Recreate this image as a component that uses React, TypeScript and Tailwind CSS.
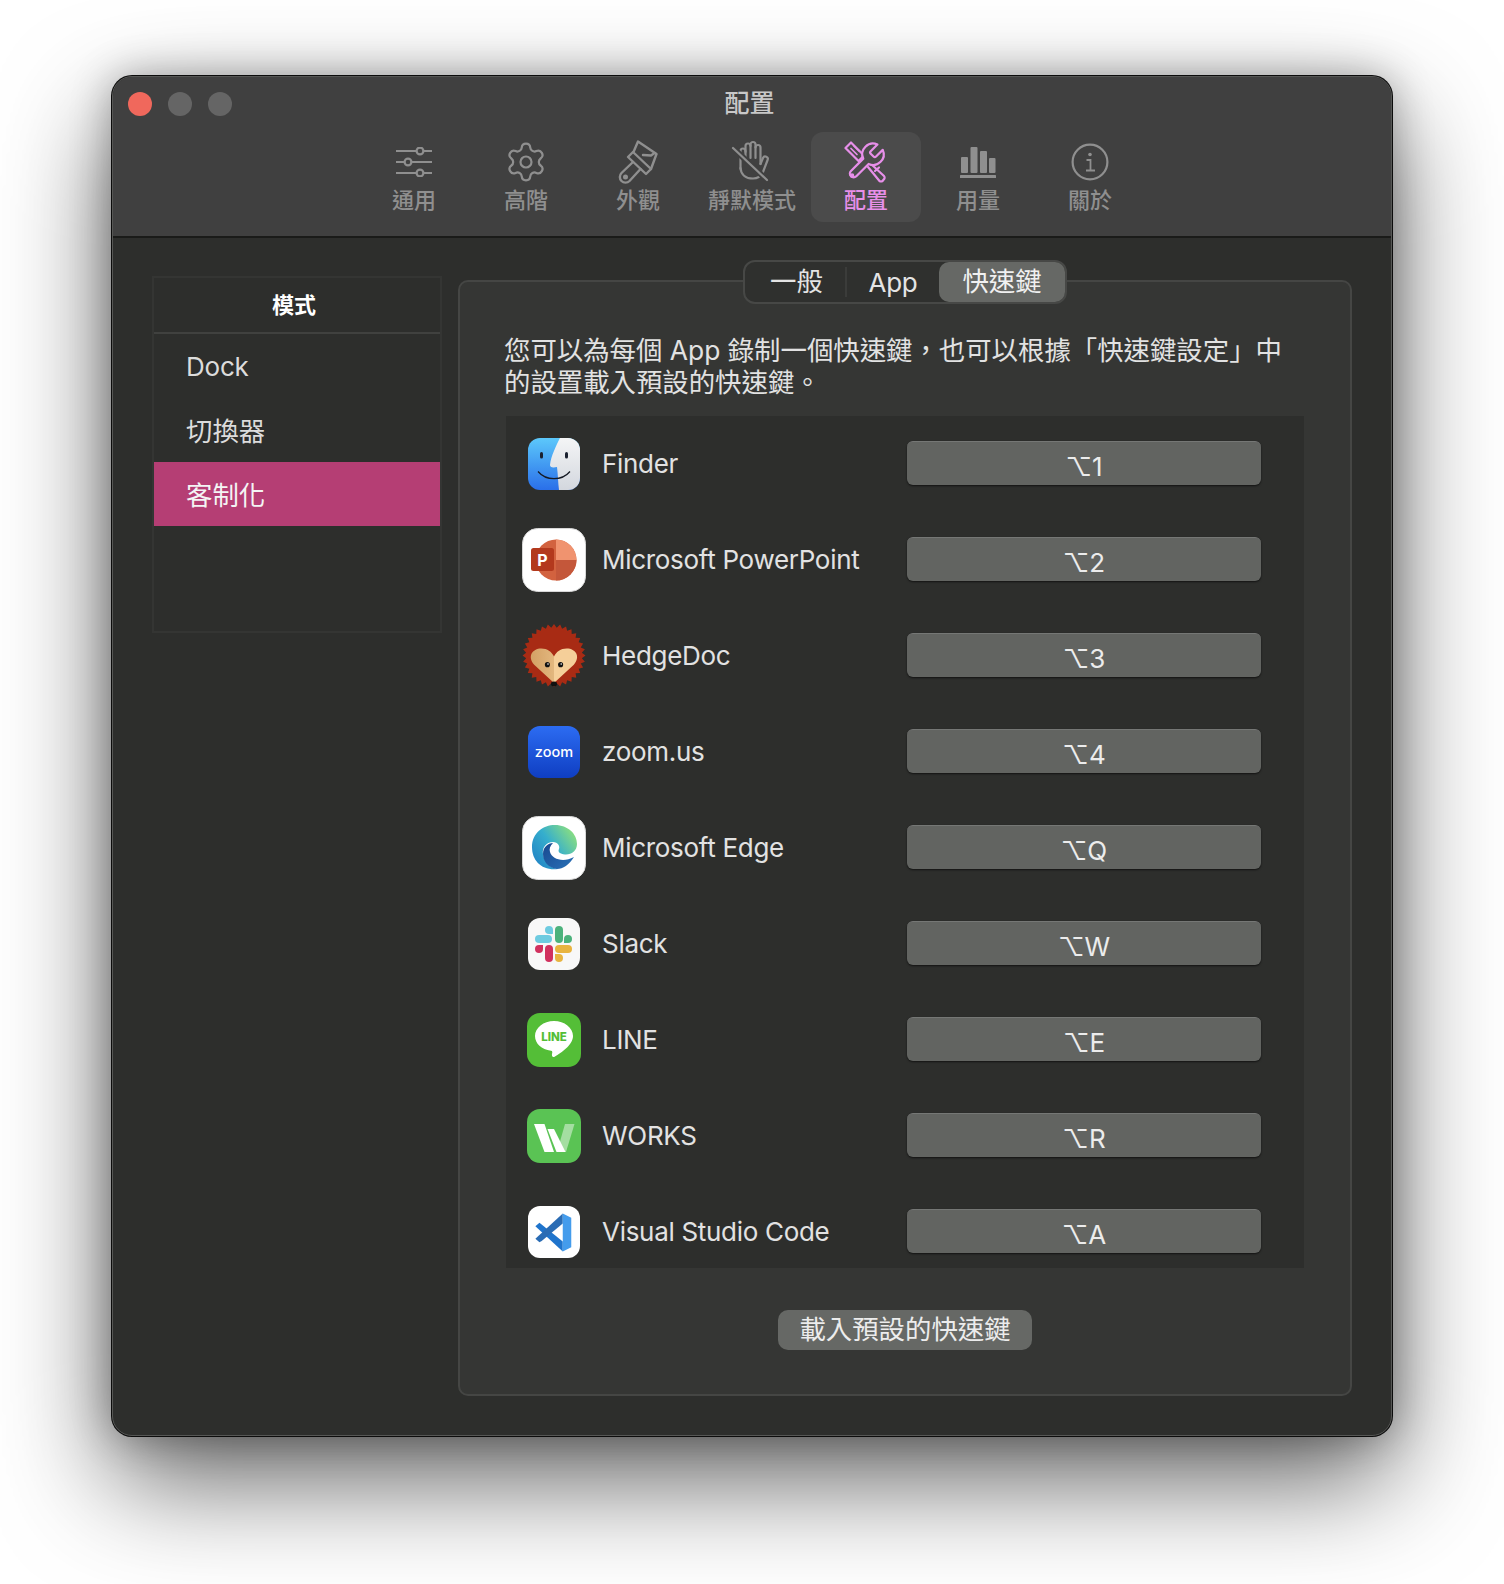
import React from "react";
import { Settings } from "lucide-react";

const G = "#8f8f8f";

function Sliders() {
  return (
    <svg width="36" height="30" viewBox="0 0 36 30" fill="none" stroke={G} strokeWidth="2.2">
      <path d="M0 4H20M28 4H36M0 15H8M16 15H36M0 26H20M28 26H36" />
      <circle cx="24" cy="4" r="3.4" />
      <circle cx="12" cy="15" r="3.4" />
      <circle cx="24" cy="26" r="3.4" />
    </svg>
  );
}

function Brush() {
  return (
    <svg width="40" height="44" viewBox="0 0 40 44" fill="none" stroke={G} strokeWidth="2.4" strokeLinejoin="round" strokeLinecap="round">
      <path d="M15.5 12 L20 1.5 L38.5 14 L33 29" />
      <path d="M25 15 L33 15.5 L36.5 13" />
      <path d="M10 17 L15 12 L33 29 L28 34 Z" />
      <path d="M15 22 L3.5 33 A5.5 5.5 0 0 0 11.5 41 L22.5 29" />
      <circle cx="7.5" cy="37" r="1.3" />
    </svg>
  );
}

function HandOff() {
  return (
    <svg width="44" height="44" viewBox="0 0 44 44" fill="none" stroke={G} strokeWidth="2.2" strokeLinecap="round" strokeLinejoin="round">
      <path d="M10.5 29 V11 a2.5 2.5 0 0 1 5 0 V18" />
      <path d="M15.5 12 V6 a2.5 2.5 0 0 1 5 0 V18" />
      <path d="M20.5 6 V4.5 a2.5 2.5 0 0 1 5 0 V18" />
      <path d="M25.5 7.5 a2.5 2.5 0 0 1 5 0 V24" />
      <path d="M30.5 24 L33 18 a2.5 2.5 0 0 1 4.6 2 L33 32 C31 36 27 38.5 23 38.5 C16 38.5 11 35 10.5 28" />
      <path d="M3 8L37 40" stroke="#404040" strokeWidth="6" strokeLinecap="butt" />
      <path d="M3 8L37 40" />
    </svg>
  );
}

function Tools() {
  return (
    <svg width="44" height="44" viewBox="0 0 44 44" fill="none" stroke="#e78fe9" strokeWidth="2.2" strokeLinejoin="round" strokeLinecap="round">
      <path d="M1.5 8 L7 2.5 L20 15.5 L14.5 21 Z" />
      <path d="M7 8.5 L13 14.5 M10 6 L15 11" strokeWidth="1.7" />
      <path d="M24 27 L35.5 41 Q37 42 38.5 41 L40.5 38.5 Q41 37 40 36 L27 24" />
      <path d="M31 31 L35 27.5" />
      <g transform="scale(1.78) translate(0.3 0)" strokeWidth="1.25">
        <path d="M14.7 6.3a1 1 0 0 0 0 1.4l1.6 1.6a1 1 0 0 0 1.4 0l3.77-3.77a6 6 0 0 1-7.94 7.94l-6.91 6.91a2.12 2.12 0 0 1-3-3l6.91-6.91a6 6 0 0 1 7.94-7.94l-3.76 3.76z" fill="#4b4b4b" />
      </g>
      <circle cx="8" cy="35.5" r="1.2" />
    </svg>
  );
}

function Bars() {
  return (
    <svg width="36" height="32" viewBox="0 0 36 32" fill={G}>
      <rect x="1" y="11" width="7" height="16" rx="1" />
      <rect x="10.5" y="1" width="7" height="26" rx="1" />
      <rect x="20" y="5" width="7" height="22" rx="1" />
      <rect x="29" y="12" width="6.5" height="15" rx="1" />
      <rect x="0" y="29" width="36" height="3" rx="0.5" />
    </svg>
  );
}

function Info() {
  return (
    <svg width="38" height="38" viewBox="0 0 38 38" fill="none" stroke={G} strokeWidth="2.2">
      <circle cx="19" cy="19" r="17.4" />
      <circle cx="19" cy="11.5" r="1.8" fill={G} stroke="none" />
      <path d="M15.5 17H19.5V27M15 27.5H24" strokeWidth="1.8" />
    </svg>
  );
}

function Finder() {
  return (
    <svg width="52" height="52" viewBox="0 0 52 52">
      <defs>
        <linearGradient id="fb" x1="0" y1="0" x2="0" y2="1">
          <stop offset="0" stopColor="#5cc8fb" />
          <stop offset="1" stopColor="#2a6fe9" />
        </linearGradient>
        <linearGradient id="fw" x1="0" y1="0" x2="0" y2="1">
          <stop offset="0" stopColor="#f4f5f6" />
          <stop offset="1" stopColor="#d3d7de" />
        </linearGradient>
        <clipPath id="fc">
          <rect width="52" height="52" rx="12" />
        </clipPath>
      </defs>
      <g clipPath="url(#fc)">
        <rect width="52" height="52" fill="url(#fb)" />
        <path d="M32 0 C28 8 23 18 22 27 C22 29 24 30 29 29 C30 37 30 45 31 52 L52 52 L52 0 Z" fill="url(#fw)" />
      </g>
      <rect x="12" y="14" width="3" height="6.5" rx="1.5" fill="#1a2130" />
      <rect x="37" y="14" width="3" height="6.5" rx="1.5" fill="#1a2130" />
      <path d="M10 33.5 C18 43 34 43 42 33.5" fill="none" stroke="#151a24" strokeWidth="1.2" />
    </svg>
  );
}

function PowerPoint() {
  return (
    <svg width="64" height="64" viewBox="0 0 64 64">
      <rect x="0.5" y="0.5" width="63" height="63" rx="15" fill="#fff" stroke="#d8d8d8" />
      <circle cx="34" cy="32" r="20.5" fill="#d2623f" />
      <path d="M34 32 V11.5 A20.5 20.5 0 0 1 54.5 32 Z" fill="#f0936f" />
      <path d="M34 32 H54.5 A20.5 20.5 0 0 1 34 52.5 Z" fill="#c4573a" />
      <rect x="9" y="20" width="23" height="23" rx="2.5" fill="#b3391d" />
      <text x="20.5" y="37.5" textAnchor="middle" fontFamily="Inter, sans-serif" fontWeight="700" fontSize="16" fill="#fff">P</text>
    </svg>
  );
}

function Hedgehog() {
  const pts: string[] = [];
  const n = 32;
  for (let i = 0; i < n * 2; i++) {
    const r = i % 2 === 0 ? 31 : 27.5;
    const a = (Math.PI * i) / n;
    pts.push(`${31.5 + r * Math.cos(a)},${31 + r * Math.sin(a)}`);
  }
  return (
    <svg width="64" height="64" viewBox="0 0 63 63">
      <defs>
        <linearGradient id="hh" x1="0" y1="0" x2="1" y2="0">
          <stop offset="0" stopColor="#d4a165" />
          <stop offset="0.5" stopColor="#e2b77e" />
          <stop offset="0.5" stopColor="#f5cf99" />
          <stop offset="1" stopColor="#f5cf99" />
        </linearGradient>
      </defs>
      <polygon points={pts.join(" ")} fill="#a82b14" />
      <path d="M31.5 58 L12 40 C5 32 10 24 19 24 C25 24 29 27 31.5 32 C34 27 38 24 44 24 C53 24 58 32 51 40 Z" fill="url(#hh)" />
      <circle cx="25" cy="40" r="2.5" fill="#111" />
      <circle cx="38" cy="40" r="2.5" fill="#111" />
      <circle cx="25.6" cy="39.4" r="0.8" fill="#fff" />
      <circle cx="38.6" cy="39.4" r="0.8" fill="#fff" />
      <ellipse cx="31.5" cy="59" rx="3" ry="2.4" fill="#111" />
    </svg>
  );
}

function Zoom() {
  return (
    <svg width="52" height="52" viewBox="0 0 52 52">
      <defs>
        <linearGradient id="zb" x1="0" y1="0" x2="0" y2="1">
          <stop offset="0" stopColor="#2c6cf2" />
          <stop offset="1" stopColor="#0f3ec2" />
        </linearGradient>
      </defs>
      <rect width="52" height="52" rx="12" fill="url(#zb)" />
      <text x="26" y="30.5" textAnchor="middle" fontFamily="Inter, sans-serif" fontWeight="500" fontSize="14.5" fill="#fff">zoom</text>
    </svg>
  );
}

function Edge() {
  return (
    <svg width="64" height="64" viewBox="0 0 64 64">
      <defs>
        <linearGradient id="eg" x1="0" y1="1" x2="1" y2="0.3">
          <stop offset="0" stopColor="#1f7cc4" />
          <stop offset="0.55" stopColor="#35aecd" />
          <stop offset="1" stopColor="#86dc84" />
        </linearGradient>
        <linearGradient id="ed" x1="0" y1="0" x2="1" y2="1">
          <stop offset="0" stopColor="#18488f" />
          <stop offset="1" stopColor="#2a72b8" />
        </linearGradient>
      </defs>
      <rect x="0.5" y="0.5" width="63" height="63" rx="15" fill="#fff" stroke="#d8d8d8" />
      <path d="M10 31 C10 17 21 9 33 9 C46 9 55 18 55 28 C55 35 49 39 43 38.5 C38 38 35.5 36 37 33 C38 30 36 26 31 26 C24 26 20 32 21 38 C22 46 28 52 36 53 C20 55 10 45 10 31 Z" fill="url(#eg)" />
      <path d="M21 38 C21 31 26 27 31 27 C28 30 27 33 28 36 C30 43 41 47 52 41 C47 49 41 53 35 53 C27 52 21 46 21 38 Z" fill="url(#ed)" />
    </svg>
  );
}

function Slack() {
  return (
    <svg width="52" height="52" viewBox="0 0 52 52">
      <rect width="52" height="52" rx="12" fill="#f8f8f8" />
      <g fill="#6ecbe0">
        <rect x="7" y="17" width="17" height="8" rx="4" />
        <path d="M17 12a4 4 0 0 1 8 0v4h-4a4 4 0 0 1-4-4z" />
      </g>
      <g fill="#4cb27c">
        <rect x="27" y="8" width="8" height="17" rx="4" />
        <path d="M40 17a4 4 0 0 1 0 8h-4v-4a4 4 0 0 1 4-4z" />
      </g>
      <g fill="#e8b440">
        <rect x="27" y="27" width="17" height="8" rx="4" />
        <path d="M27 36h4a4 4 0 0 1 0 8 4 4 0 0 1-4-4z" />
      </g>
      <g fill="#d1315f">
        <rect x="17" y="27" width="8" height="17" rx="4" />
        <path d="M11 27a4 4 0 0 0 0 8 4 4 0 0 0 4-4v-4z" />
      </g>
    </svg>
  );
}

function Line() {
  return (
    <svg width="54" height="54" viewBox="0 0 54 54">
      <rect width="54" height="54" rx="13" fill="#54be37" />
      <path d="M27 8 C16.5 8 8 14.8 8 23 C8 30.5 14.5 36.5 24 37.8 C25.4 38 25.6 39 25 41 C24.6 43 25.5 45 28 43.5 C34 40 46 32 46 23 C46 14.8 37.5 8 27 8 Z" fill="#fff" />
      <text x="27" y="27.5" textAnchor="middle" fontFamily="Inter, sans-serif" fontWeight="800" fontSize="11.5" fill="#54be37">LINE</text>
    </svg>
  );
}

function Works() {
  return (
    <svg width="54" height="54" viewBox="0 0 54 54">
      <rect width="54" height="54" rx="13" fill="#5ac354" />
      <polygon points="38,15 47.5,15 39,43 30,43" fill="#fff" opacity="0.45" />
      <polygon points="7,15 17.5,15 27,43 17.5,43" fill="#fff" />
      <polygon points="20.5,20 27,20 38.5,43 29.5,43" fill="#fff" />
    </svg>
  );
}

function VSCode() {
  return (
    <svg width="52" height="52" viewBox="0 0 52 52">
      <rect width="52" height="52" rx="12" fill="#fff" />
      <g transform="translate(7 7) scale(0.37 0.39)">
        <polygon points="12,25 1,34 75,99 75,73" fill="#1f74cc" />
        <polygon points="75,1 75,27 18,72 12,75 1,66" fill="#2a6cb4" />
        <polygon points="75,1 98,12 98,88 75,99" fill="#449cec" />
      </g>
    </svg>
  );
}

const tabs = [
  { label: "通用", icon: <Sliders />, w: "w-[112px]" },
  { label: "高階", icon: <Settings size={44} color={G} strokeWidth={1.2} />, w: "w-[112px]" },
  { label: "外觀", icon: <Brush />, w: "w-[112px]" },
  { label: "靜默模式", icon: <HandOff />, w: "w-[116px]" },
];
const tabsAfter = [
  { label: "用量", icon: <Bars /> },
  { label: "關於", icon: <Info /> },
];

const apps = [
  { name: "Finder", key: "⌥1", icon: <Finder /> },
  { name: "Microsoft PowerPoint", key: "⌥2", icon: <PowerPoint /> },
  { name: "HedgeDoc", key: "⌥3", icon: <Hedgehog /> },
  { name: "zoom.us", key: "⌥4", icon: <Zoom /> },
  { name: "Microsoft Edge", key: "⌥Q", icon: <Edge /> },
  { name: "Slack", key: "⌥W", icon: <Slack /> },
  { name: "LINE", key: "⌥E", icon: <Line /> },
  { name: "WORKS", key: "⌥R", icon: <Works /> },
  { name: "Visual Studio Code", key: "⌥A", icon: <VSCode /> },
];

function ToolbarItem({ label, icon, w }: { label: string; icon: React.ReactNode; w: string }) {
  return (
    <div className={`${w} h-[90px] flex flex-col items-center`}>
      <div className="h-[54px] flex items-center justify-center pt-[6px]">{icon}</div>
      <div className="text-[22px] leading-[28px] font-medium text-[#8f8f8f]">{label}</div>
    </div>
  );
}

export default function App() {
  return (
    <div className="h-[1584px] overflow-hidden bg-white pt-[76px] pl-[112px] font-[Inter,'Noto_Sans_CJK_TC','DejaVu_Sans',sans-serif]">
      <div className="w-[1280px] h-[1360px] rounded-[20px] overflow-hidden bg-[#2d2e2c] border border-[#565755] shadow-[0_0_0_1px_#0c0c0c,0_44px_110px_rgba(0,0,0,0.62),0_0_40px_rgba(0,0,0,0.3)] flex flex-col">
        {/* header */}
        <div className="h-[161px] shrink-0 bg-[#404040] border-b-2 border-[#1a1b19] flex flex-col">
          <div className="h-[55px] flex items-center pl-[15px] pb-[2px] shrink-0">
            <div className="flex gap-[16px]">
              <div className="w-[24px] h-[24px] rounded-full bg-[#f0685c]" />
              <div className="w-[24px] h-[24px] rounded-full bg-[#656565]" />
              <div className="w-[24px] h-[24px] rounded-full bg-[#656565]" />
            </div>
            <div className="flex-1 text-center text-[25px] font-medium text-[#c8c8c8] pr-[124px]">配置</div>
          </div>
          <div className="flex justify-center">
            {tabs.map((t) => (
              <ToolbarItem key={t.label} label={t.label} icon={t.icon} w={t.w} />
            ))}
            <div className="w-[110px] h-[90px] rounded-[12px] bg-[#4b4b4b] flex flex-col items-center mx-[1px]">
              <div className="h-[54px] flex items-center justify-center pt-[6px]">
                <Tools />
              </div>
              <div className="text-[22px] leading-[28px] font-medium text-[#e78fe9]">配置</div>
            </div>
            {tabsAfter.map((t) => (
              <ToolbarItem key={t.label} label={t.label} icon={t.icon} w="w-[112px]" />
            ))}
          </div>
        </div>

        {/* body */}
        <div className="flex-1 flex pl-[39px] pr-[39px] pt-[38px] pb-[39px] gap-[16px]">
          {/* sidebar */}
          <div className="w-[290px] h-[357px] shrink-0 border-2 border-[#343533]">
            <div className="h-[56px] flex items-center justify-center border-b-2 border-[#40413f] pr-[6px] pt-[1px] text-[22px] font-semibold text-white">模式</div>
            <div className="h-[64px] flex items-center pl-[32px] text-[26px] tracking-[-0.2px] text-[#dcdcdc]">Dock</div>
            <div className="h-[64px] flex items-center pl-[32px] pt-[3px] text-[26.4px] text-[#dcdcdc]">切換器</div>
            <div className="h-[64px] flex items-center pl-[32px] pt-[3px] text-[26.4px] text-[#f4f4f4] bg-[#b53e74]">客制化</div>
          </div>

          {/* main */}
          <div className="flex-1 mt-[4px] rounded-[10px] border-2 border-[#454644] bg-[#353634] flex flex-col items-center">
            <div className="-mt-[22px] h-[44px] w-[324px] shrink-0 rounded-[12px] border-2 border-[#474846] bg-[#2f302e] flex items-center text-[26.4px] text-[#e4e4e4]">
              <div className="w-[100px] text-center pl-[3px]">一般</div>
              <div className="w-[2px] h-[30px] bg-[#3b3c3a]" />
              <div className="w-[92px] text-center text-[26px] tracking-[-0.3px]">App</div>
              <div className="w-[126px] h-[40px] rounded-[10px] bg-[#666865] flex items-center justify-center text-[#f0f0f0]">快速鍵</div>
            </div>

            <div className="self-start pl-[44px] pt-[30px] pr-[60px] text-[26.4px] leading-[32px] text-[#e2e2e2]">
              您可以為每個 App 錄制一個快速鍵，也可以根據「快速鍵設定」中的設置載入預設的快速鍵。
            </div>

            <div className="self-start ml-[46px] mt-[18px] w-[798px] h-[852px] overflow-hidden bg-[#2d2e2c]">
              {apps.map((a) => (
                <div key={a.name} className="h-[96px] flex items-center pl-[16px]">
                  <div className="w-[64px] h-[64px] flex items-center justify-center shrink-0">{a.icon}</div>
                  <div className="ml-[16px] w-[305px] shrink-0 pb-[2px] text-[26px] tracking-[-0.3px] text-[#e2e2e2]">{a.name}</div>
                  <div className="w-[354px] h-[44px] -mt-[2px] rounded-[6px] bg-[#626461] border-t border-[#757775] shadow-[0_1px_2px_rgba(0,0,0,0.6)] flex items-center justify-center pt-[6px] text-[26px] text-[#ececec]">
                    {a.key}
                  </div>
                </div>
              ))}
            </div>

            <div className="mt-[42px] w-[254px] h-[40px] rounded-[10px] bg-[#666865] flex items-center justify-center text-[26.4px] text-[#ececec]">
              載入預設的快速鍵
            </div>
          </div>
        </div>
      </div>
    </div>
  );
}
